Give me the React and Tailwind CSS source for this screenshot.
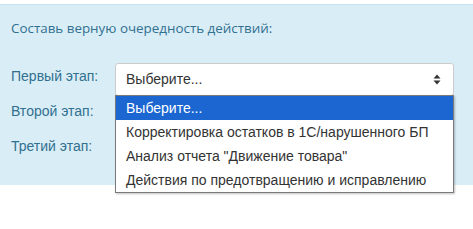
const options = [
  "Выберите...",
  "Корректировка остатков в 1С/нарушенного БП",
  "Анализ отчета \"Движение товара\"",
  "Действия по предотвращению и исправлению",
];

function Caret() {
  return (
    <svg width="8" height="11" viewBox="0 0 8 11" className="text-[#333]">
      <path d="M4 0.5 L7.5 4.5 H0.5 Z" fill="currentColor" />
      <path d="M4 10.5 L7.5 6.5 H0.5 Z" fill="currentColor" />
    </svg>
  );
}

function SelectBox({ open }) {
  return (
    <div className="relative w-[339px]">
      <div className="h-[33px] flex items-center justify-between bg-white border border-[#ccc] rounded-[3px] pl-[10px] pr-[12px] text-[14px] text-[#333] font-['Liberation_Sans',Arial,sans-serif]">
        <span>Выберите...</span>
        <Caret />
      </div>
      {open && (
        <ul className="absolute left-0 top-[32px] w-[339px] bg-white border border-[#7a7a7a] z-10 text-[14px] font-['Liberation_Sans',Arial,sans-serif] text-[#333] shadow-[1px_1px_2px_rgba(0,0,0,0.25)]">
          {options.map((o, i) => (
            <li
              key={o}
              className={
                "h-[24px] flex items-center pl-[10px] " +
                (i === 0 ? "bg-[#1b66d1] text-white h-[23px]" : "")
              }
            >
              {o}
            </li>
          ))}
        </ul>
      )}
    </div>
  );
}

export default function App() {
  const rows = ["Первый этап:", "Второй этап:", "Третий этап:"];
  return (
    <div className="w-[473px] h-[229px] bg-white pt-[4px]">
      <div className="h-[181px] bg-[#d9edf7] border-t border-[#c4e3f0] pl-[11px]">
        <p className="pt-[12px] text-[13.4px] text-[#31708f] font-['Open_Sans',sans-serif] leading-[22px]">
          Составь верную очередность действий:
        </p>
        <div className="mt-[24px] flex flex-col gap-[2px]">
          {rows.map((r, i) => (
            <div key={r} className="flex items-start h-[33px]">
              <span className="w-[104px] pt-[3px] text-[14px] text-[#31708f] font-['Liberation_Sans',Arial,sans-serif]">
                {r}
              </span>
              <SelectBox open={i === 0} />
            </div>
          ))}
        </div>
      </div>
    </div>
  );
}
